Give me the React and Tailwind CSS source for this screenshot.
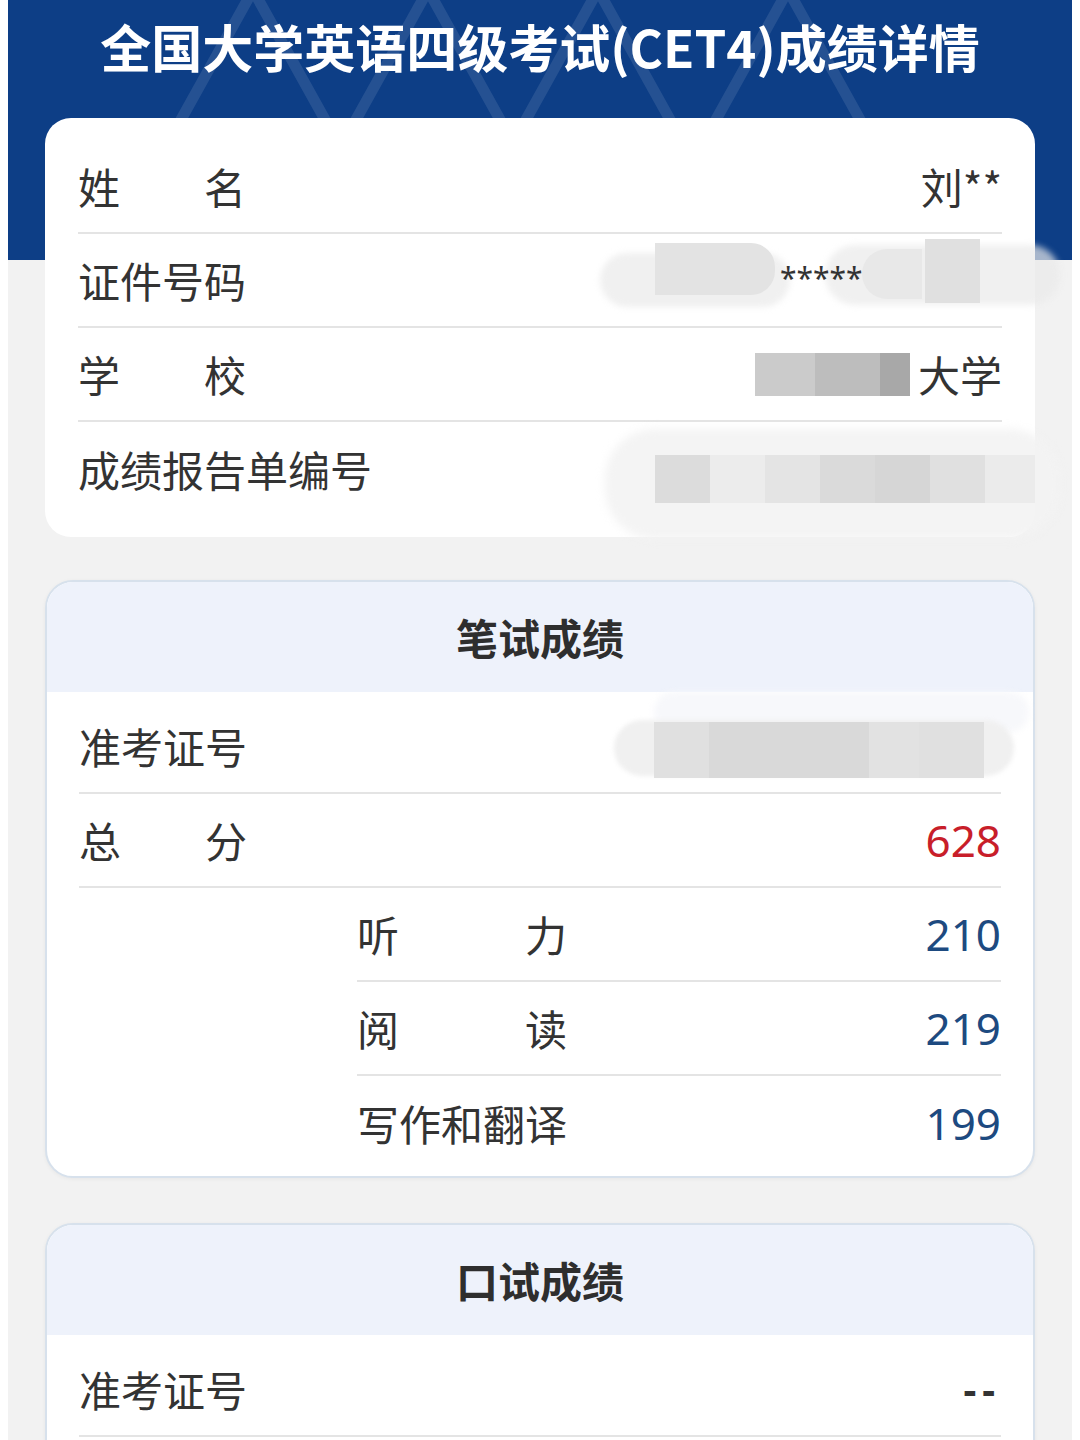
import React from 'react'

const cjk = "font-['Noto_Sans_CJK_SC','Noto_Sans',sans-serif]"
const num = "font-['Noto_Sans','Noto_Sans_CJK_SC',sans-serif]"

// label with characters spread across a fixed width (like 姓　名)
function Label({ text, wide = false }) {
  const chars = text.split('')
  return (
    <div className={`flex justify-between ${wide ? 'w-[210px]' : 'w-[168px]'}`}>
      {chars.map((c, i) => (
        <span key={i}>{c}</span>
      ))}
    </div>
  )
}

function HeaderPattern() {
  const peaks = [245, 420, 590, 780]
  return (
    <svg className="absolute inset-0" width="1064" height="260" viewBox="0 0 1064 260">
      {peaks.map((x) => (
        <polyline
          key={x}
          points={`${x - 150},260 ${x},-10 ${x + 150},260`}
          fill="none"
          stroke="#ffffff"
          strokeOpacity="0.1"
          strokeWidth="11"
        />
      ))}
    </svg>
  )
}

function Row({ label, value, valueClass = 'text-[#333]', last = false, children }) {
  return (
    <div
      className={`relative flex h-[94px] items-center justify-between ${last ? '' : 'border-b-2 border-[#e4e4e4]'}`}
    >
      {typeof label === 'string' ? <Label text={label} /> : label}
      {value && <span className={valueClass}>{value}</span>}
      {children}
    </div>
  )
}

function SectionCard({ title, children, className = '' }) {
  return (
    <div className={`rounded-[28px] border-2 border-[#d7e1ec] bg-white shadow-[0_1px_4px_rgba(0,0,0,0.05)] ${className}`}>
      <div className="flex h-[110px] items-center justify-center rounded-t-[26px] bg-[#eef2fb] text-[42px] font-bold text-[#2e2e2e]">
        {title}
      </div>
      <div className="px-[32px] pt-[8px] pb-[6px]">{children}</div>
    </div>
  )
}

export default function App() {
  return (
    <div className={`h-[1440px] overflow-hidden bg-white px-[8px] ${cjk} text-[42px] leading-none text-[#333]`}>
      <div className="min-h-full bg-[#f2f2f2]">
        {/* blue banner */}
        <div className="relative h-[260px] bg-[#0d3e86]">
          <HeaderPattern />
          <div className="relative flex h-[92px] items-center justify-center text-[51px] font-bold text-white">
            全国大学英语四级考试(CET4)成绩详情
          </div>
        </div>

        <div className="-mt-[142px] px-[37px]">
          {/* personal info */}
          <div className="relative rounded-[26px] bg-white px-[33px] pt-[22px] pb-[21px]">
            <Row label="姓名" value="刘**" />
            <Row label="证件号码">
              <div className="absolute left-[522px] top-[5px] h-[70px] w-[460px]">
                <div className="absolute left-0 top-[14px] h-[54px] w-[190px] rounded-[30px] bg-[#ececec]/80 blur-[3px]" />
                <div className="absolute left-[225px] top-[6px] h-[60px] w-[235px] rounded-[30px] bg-[#e9e9e9]/70 blur-[3px]" />
                <div className="absolute left-[55px] top-[4px] h-[52px] w-[120px] rounded-r-[24px] bg-[#e3e3e3]" />
                <div className="absolute left-[325px] top-0 h-[64px] w-[55px] bg-[#e0e0e0]" />
                <span className={`absolute left-[180px] top-[24px] text-[30px] leading-none text-[#333] ${num}`}>
                  *****
                </span>
                <div className="absolute left-[262px] top-[10px] h-[50px] w-[60px] rounded-l-[26px] bg-[#e8e8e8]" />
              </div>
            </Row>
            <Row label="学校">
              <span className="ml-auto">大学</span>
              <div className="absolute left-[677px] top-[25px] flex h-[43px] w-[155px] blur-[0.5px]">
                <div className="w-[60px] bg-[#cbcbcb]" />
                <div className="w-[65px] bg-[#bdbdbd]" />
                <div className="w-[30px] bg-[#a8a8a8]" />
              </div>
            </Row>
            <Row label={<span className="whitespace-nowrap">成绩报告单编号</span>} last>
              <div className="absolute left-[527px] top-[1px] h-[128px] w-[455px]">
                <div className="absolute left-0 top-[6px] h-[110px] w-[455px] rounded-[50px] bg-[#f3f3f3]/90 blur-[4px]" />
                <div className="absolute left-[50px] top-[32px] flex h-[48px] w-[380px]">
                  <div className="w-[55px] bg-[#dcdcdc]" />
                  <div className="w-[55px] bg-[#ececec]" />
                  <div className="w-[55px] bg-[#e4e4e4]" />
                  <div className="w-[55px] bg-[#dadada]" />
                  <div className="w-[55px] bg-[#d6d6d6]" />
                  <div className="w-[55px] bg-[#e0e0e0]" />
                  <div className="w-[50px] bg-[#ebebeb]" />
                </div>
              </div>
            </Row>
          </div>

          {/* written test */}
          <SectionCard title="笔试成绩" className="mt-[43px]">
            <Row label="准考证号">
              <div className="absolute left-[535px] top-[-8px] h-[90px] w-[415px]">
                <div className="absolute left-[40px] top-0 h-[40px] w-[375px] rounded-[20px] bg-[#f7f8fb] blur-[3px]" />
                <div className="absolute left-0 top-[28px] h-[56px] w-[400px] rounded-[28px] bg-[#f0f0f0] blur-[2px]" />
                <div className="absolute left-[40px] top-[30px] flex h-[56px] w-[330px]">
                  <div className="w-[55px] bg-[#e0e0e0]" />
                  <div className="w-[160px] bg-[#d9d9d9]" />
                  <div className="w-[50px] bg-[#e2e2e2]" />
                  <div className="w-[65px] bg-[#e0e0e0]" />
                </div>
              </div>
            </Row>
            <Row label="总分" value="628" valueClass={`text-[44px] text-[#c81e2a] ${num}`} />
            <div className="ml-[278px]">
              <Row label={<Label text="听力" wide />} value="210" valueClass={`text-[44px] text-[#1d4a80] ${num}`} />
              <Row label={<Label text="阅读" wide />} value="219" valueClass={`text-[44px] text-[#1d4a80] ${num}`} />
              <Row
                label={<Label text="写作和翻译" wide />}
                value="199"
                valueClass={`text-[44px] text-[#1d4a80] ${num}`}
                last
              />
            </div>
          </SectionCard>

          {/* oral test */}
          <SectionCard title="口试成绩" className="mt-[45px]">
            <Row label="准考证号" value="--" valueClass={`text-[40px] font-bold tracking-[6px] text-[#333] ${num}`} />
            <div className="h-[60px]" />
          </SectionCard>
        </div>
      </div>
    </div>
  )
}
